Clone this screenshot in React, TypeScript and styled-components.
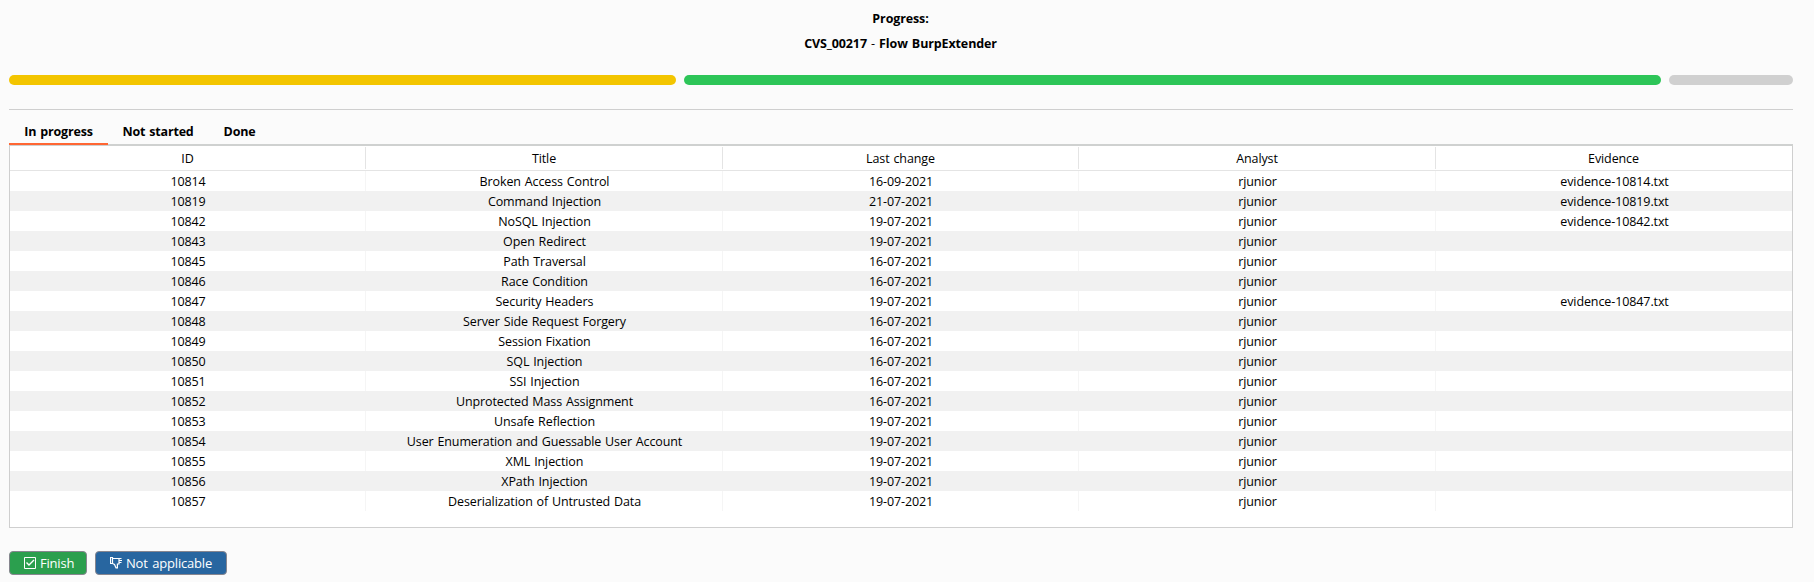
import React from "react";
import styled, { createGlobalStyle } from "styled-components";

const Global = createGlobalStyle`
  * { box-sizing: border-box; }
  body {
    margin: 0;
    background: #fbfbfb;
    color: #000;
    font: 12.5px/20px "Open Sans", "Noto Sans", sans-serif;
    letter-spacing: -0.1px;
    word-spacing: 0.7px;
  }
`;

const Page = styled.main`
  width: 1814px;
  height: 582px;
  padding: 6px 21px 0 9px;
  display: flex;
  flex-direction: column;
  overflow: hidden;
`;

const Heading = styled.header`
  height: 69px;
  flex: none;
  padding-right: 1px;
  text-align: center;
  font-weight: 700;
  line-height: 25px;
  letter-spacing: -0.12px;
  word-spacing: 1px;
`;

const Line = styled.div``;
const Dash = styled.span`
  font-weight: 400;
`;

const Bars = styled.div`
  display: flex;
  gap: 8px;
  height: 10px;
  flex: none;
`;

const Bar = styled.div<{ $width: number; $color: string }>`
  width: ${(p) => p.$width}px;
  background: ${(p) => p.$color};
  border-radius: 5px;
`;

const Divider = styled.div`
  height: 1px;
  flex: none;
  margin: 24px 0 11px;
  background: #cfcfcf;
`;

const Tabs = styled.nav`
  display: flex;
  height: 25px;
  flex: none;
  background: linear-gradient(#cfd1d0, #cfd1d0) 0 23px / 100% 2px no-repeat;
`;

const Tab = styled.button<{ $active?: boolean; $width: number }>`
  width: ${(p) => p.$width}px;
  height: 24px;
  padding: 0;
  border: 0;
  border-bottom: 2px solid ${(p) => (p.$active ? "#ff6633" : "transparent")};
  background: none;
  color: #000;
  font: inherit;
  font-weight: 700;
  line-height: 20px;
  letter-spacing: -0.18px;
  word-spacing: 1px;
`;

const Panel = styled.section`
  height: 382px;
  flex: none;
  border: 1px solid #cfcfcf;
  border-top: 0;
  background: #fff;
`;

const columns = "356px 357px 356px 357px 356px";

const HeadRow = styled.div`
  display: grid;
  grid-template-columns: ${columns};
  height: 25px;
  padding: 1px 0;
  border-bottom: 1px solid #e4e4e4;
`;

const HeadCell = styled.div`
  height: 22px;
  border-right: 1px solid #e4e4e4;
  text-align: center;
  line-height: 24px;
  &:last-child { border-right-color: transparent; }
`;

const Row = styled.div`
  display: grid;
  grid-template-columns: ${columns};
  height: 20px;
  &:nth-child(odd) { background: #f1f1f1; }
`;

const Cell = styled.div`
  height: 20px;
  border-right: 1px solid #f5f5f5;
  text-align: center;
  line-height: 22px;
  padding-left: 1px;
  white-space: nowrap;
  ${Row}:nth-child(odd) & { border-right-color: #f1f1f1; }
  &:last-child { border-right: 0; }
`;

const Actions = styled.footer`
  display: flex;
  gap: 8px;
  margin-top: 23px;
`;

const Action = styled.button<{ $color: string; $width: number }>`
  display: flex;
  align-items: center;
  gap: 4px;
  width: ${(p) => p.$width}px;
  height: 24px;
  padding: 0 0 0 14px;
  border: 1px solid #87868f;
  border-radius: 4px;
  background: ${(p) => p.$color};
  color: #fff;
  font: inherit;
  font-size: 13px;
  letter-spacing: -0.2px;
  word-spacing: 1.5px;
  white-space: nowrap;
`;

const Glyph = styled.svg`
  width: 12px;
  height: 12px;
  flex: none;
  fill: none;
  stroke: #fff;
`;

const rows = [
  ["10814", "Broken Access Control", "16-09-2021", "evidence-10814.txt"],
  ["10819", "Command Injection", "21-07-2021", "evidence-10819.txt"],
  ["10842", "NoSQL Injection", "19-07-2021", "evidence-10842.txt"],
  ["10843", "Open Redirect", "19-07-2021", ""],
  ["10845", "Path Traversal", "16-07-2021", ""],
  ["10846", "Race Condition", "16-07-2021", ""],
  ["10847", "Security Headers", "19-07-2021", "evidence-10847.txt"],
  ["10848", "Server Side Request Forgery", "16-07-2021", ""],
  ["10849", "Session Fixation", "16-07-2021", ""],
  ["10850", "SQL Injection", "16-07-2021", ""],
  ["10851", "SSI Injection", "16-07-2021", ""],
  ["10852", "Unprotected Mass Assignment", "16-07-2021", ""],
  ["10853", "Unsafe Reflection", "19-07-2021", ""],
  ["10854", "User Enumeration and Guessable User Account", "19-07-2021", ""],
  ["10855", "XML Injection", "19-07-2021", ""],
  ["10856", "XPath Injection", "19-07-2021", ""],
  ["10857", "Deserialization of Untrusted Data", "19-07-2021", ""],
];

export default function App() {
  return (
    <>
      <Global />
      <Page>
        <Heading>
          <Line>Progress:</Line>
          <Line>
            CVS_00217 <Dash>-</Dash> Flow BurpExtender
          </Line>
        </Heading>
        <Bars>
          <Bar $width={667} $color="#f3c500" />
          <Bar $width={977} $color="#2dc558" />
          <Bar $width={124} $color="#d0d0d0" />
        </Bars>
        <Divider />
        <Tabs>
          <Tab $active $width={99}>In progress</Tab>
          <Tab $width={100}>Not started</Tab>
          <Tab $width={63}>Done</Tab>
        </Tabs>
        <Panel>
          <HeadRow>
            {["ID", "Title", "Last change", "Analyst", "Evidence"].map((h) => (
              <HeadCell key={h}>{h}</HeadCell>
            ))}
          </HeadRow>
          {rows.map(([id, title, date, evidence]) => (
            <Row key={id}>
              <Cell>{id}</Cell>
              <Cell>{title}</Cell>
              <Cell>{date}</Cell>
              <Cell>rjunior</Cell>
              <Cell>{evidence}</Cell>
            </Row>
          ))}
        </Panel>
        <Actions>
          <Action $color="#2b9f4e" $width={78}>
            <Glyph viewBox="0 0 12 12">
              <path d="M.5.5h11v11H.5z" />
              <path d="M2.5 5.5L5 8l5-5" strokeWidth="1.4" />
            </Glyph>
            Finish
          </Action>
          <Action $color="#2866a0" $width={132}>
            <Glyph viewBox="0 0 12 12">
              <path d="M.5.5h2v6h-2zM2.5 1.5H9v5.5H7.4v3.8H6L4.5 7.5l-2-1" strokeWidth="1.2" />
              <path d="M9 1.5h2.5M9 3.5h3M9 5.5h2.5" strokeWidth="1.2" />
            </Glyph>
            Not applicable
          </Action>
        </Actions>
      </Page>
    </>
  );
}
